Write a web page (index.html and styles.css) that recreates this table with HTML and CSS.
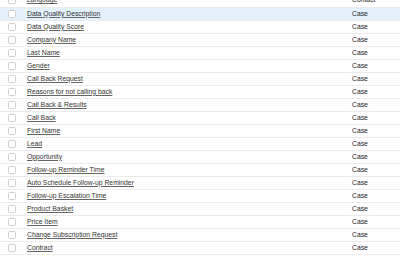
FILE: index.html
```html
<!DOCTYPE html>
<html>
<head>
<meta charset="utf-8">
<link rel="stylesheet" href="styles.css">
</head>
<body>
<table class="grid">
<tbody>
<tr><td class="c"><span class="box"></span></td><td class="n"><a>Language</a></td><td class="t">Contact</td></tr>
<tr class="sel"><td class="c"><span class="box"></span></td><td class="n"><a>Data Quality Description</a></td><td class="t">Case</td></tr>
<tr><td class="c"><span class="box"></span></td><td class="n"><a>Data Quality Score</a></td><td class="t">Case</td></tr>
<tr><td class="c"><span class="box"></span></td><td class="n"><a>Company Name</a></td><td class="t">Case</td></tr>
<tr><td class="c"><span class="box"></span></td><td class="n"><a>Last Name</a></td><td class="t">Case</td></tr>
<tr><td class="c"><span class="box"></span></td><td class="n"><a>Gender</a></td><td class="t">Case</td></tr>
<tr><td class="c"><span class="box"></span></td><td class="n"><a>Call Back Request</a></td><td class="t">Case</td></tr>
<tr><td class="c"><span class="box"></span></td><td class="n"><a>Reasons for not calling back</a></td><td class="t">Case</td></tr>
<tr><td class="c"><span class="box"></span></td><td class="n"><a>Call Back &amp; Results</a></td><td class="t">Case</td></tr>
<tr><td class="c"><span class="box"></span></td><td class="n"><a>Call Back</a></td><td class="t">Case</td></tr>
<tr><td class="c"><span class="box"></span></td><td class="n"><a>First Name</a></td><td class="t">Case</td></tr>
<tr><td class="c"><span class="box"></span></td><td class="n"><a>Lead</a></td><td class="t">Case</td></tr>
<tr><td class="c"><span class="box"></span></td><td class="n"><a>Opportunity</a></td><td class="t">Case</td></tr>
<tr><td class="c"><span class="box"></span></td><td class="n"><a>Follow-up Reminder Time</a></td><td class="t">Case</td></tr>
<tr><td class="c"><span class="box"></span></td><td class="n"><a>Auto Schedule Follow-up Reminder</a></td><td class="t">Case</td></tr>
<tr><td class="c"><span class="box"></span></td><td class="n"><a>Follow-up Escalation Time</a></td><td class="t">Case</td></tr>
<tr><td class="c"><span class="box"></span></td><td class="n"><a>Product Basket</a></td><td class="t">Case</td></tr>
<tr><td class="c"><span class="box"></span></td><td class="n"><a>Price Item</a></td><td class="t">Case</td></tr>
<tr><td class="c"><span class="box"></span></td><td class="n"><a>Change Subscription Request</a></td><td class="t">Case</td></tr>
<tr><td class="c"><span class="box"></span></td><td class="n"><a>Contract</a></td><td class="t">Case</td></tr>
</tbody>
</table>
</body>
</html>
```

FILE: styles.css
```css
html, body {
  margin: 0;
  padding: 0;
  background: #fff;
  overflow: hidden;
}
.grid {
  border-collapse: collapse;
  width: 400px;
  margin-top: -6px;
  font-family: "Liberation Sans", Arial, sans-serif;
  font-size: 6.8px;
  color: #222;
}
.grid tr {
  height: 13px;
}
.grid td {
  border-bottom: 1px solid #ebebeb;
  padding: 0;
  height: 12px;
  vertical-align: middle;
  line-height: 12px;
}
.grid tr.sel td {
  background: #e3f1fd;
}
.c {
  width: 27px;
}
.box {
  display: block;
  width: 8px;
  height: 8px;
  margin-left: 8px;
  border: 1px solid #cfcfcf;
  border-radius: 1.5px;
  background: #fff;
  box-sizing: border-box;
}
.n a {
  color: #333;
  text-decoration: underline;
  text-decoration-color: #666;
}
.t {
  width: 48px;
  color: #222;
}
```
